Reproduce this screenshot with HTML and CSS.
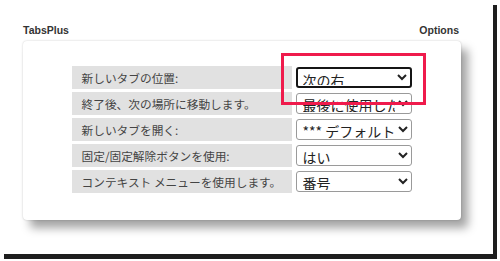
FILE: index.html
```html
<!DOCTYPE html>
<html lang="ja">
<head>
<meta charset="utf-8">
<title>TabsPlus Options</title>
<link rel="stylesheet" href="styles.css">
</head>
<body>
<div class="frame">
  <div class="panel">
    <div class="head">
      <span>TabsPlus</span>
      <span>Options</span>
    </div>
    <div class="card">
      <table class="opts">
        <tr>
          <td class="label">新しいタブの位置:</td>
          <td class="val"><select class="sel focus"><option>次の右</option></select></td>
        </tr>
        <tr>
          <td class="label">終了後、次の場所に移動します。</td>
          <td class="val"><select class="sel"><option>最後に使用したタブ</option></select></td>
        </tr>
        <tr>
          <td class="label">新しいタブを開く:</td>
          <td class="val"><select class="sel"><option>*** デフォルト</option></select></td>
        </tr>
        <tr>
          <td class="label">固定/固定解除ボタンを使用:</td>
          <td class="val"><select class="sel"><option>はい</option></select></td>
        </tr>
        <tr>
          <td class="label">コンテキスト メニューを使用します。</td>
          <td class="val"><select class="sel"><option>番号</option></select></td>
        </tr>
      </table>
    </div>
  </div>
  <div class="highlight"></div>
</div>
</body>
</html>
```
FILE: styles.css
```css
html, body {
  margin: 0;
  padding: 0;
  background: #ffffff;
}

body {
  height: 261px;
  overflow: hidden;
}

.frame {
  position: relative;
  width: 493px;
  height: 254px;
  box-sizing: border-box;
  padding: 23px 0 0 23px;
  background: #ffffff;
  box-shadow: 4px 5px 0 #1e1e1e;
}

.panel {
  width: 438px;
}

.head {
  display: flex;
  justify-content: space-between;
  height: 14px;
  line-height: 14px;
  margin-bottom: 4px;
  padding-right: 2px;
  font-family: "Liberation Sans", Arial, sans-serif;
  font-weight: bold;
  font-size: 10.5px;
  color: #333333;
}

.card {
  display: flex;
  justify-content: center;
  background: #ffffff;
  border-radius: 4px;
  padding: 22px 0 24px;
  box-shadow: 0 0 2px rgba(0, 0, 0, 0.22), 7px 8px 10px rgba(0, 0, 0, 0.36);
}

.opts {
  border-spacing: 3px;
  font-family: "Noto Sans CJK JP", "Noto Sans", sans-serif;
}

.label {
  width: 200px;
  height: 23px;
  padding: 0 10px;
  background: #e1e1e1;
  color: #444444;
  font-size: 11.7px;
  white-space: nowrap;
  vertical-align: middle;
}

.val {
  padding: 0 1px;
  vertical-align: middle;
}

.sel {
  display: block;
  width: 116px;
  height: 21px;
  box-sizing: border-box;
  border: 1px solid #9a9a9a;
  border-radius: 3px;
  background-color: #ffffff;
  color: #222222;
  font-family: "Noto Sans CJK JP", "Noto Sans", sans-serif;
  font-size: 14px;
  padding: 0 0 1px 2px;
}

.sel.focus {
  border: 2px solid #151515;
  padding-left: 1px;
}

.highlight {
  position: absolute;
  left: 281px;
  top: 53px;
  width: 145px;
  height: 52px;
  box-sizing: border-box;
  border: 3px solid #ef1b4c;
}
```
